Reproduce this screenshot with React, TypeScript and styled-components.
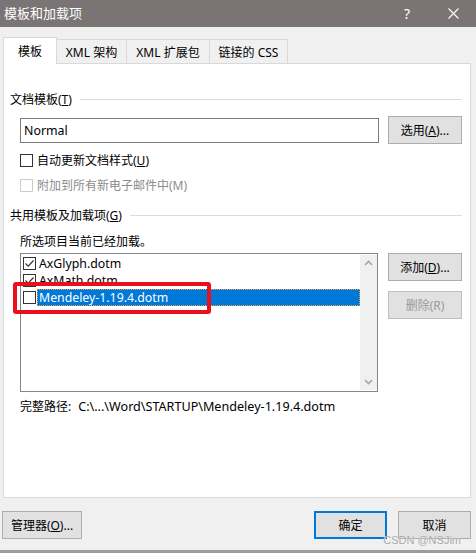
import React from "react";
import styled, { createGlobalStyle } from "styled-components";

const GlobalStyle = createGlobalStyle`
  body {
    margin: 0;
    font-family: "Noto Sans", "Noto Sans CJK SC", sans-serif;
  }
  * {
    box-sizing: border-box;
  }
`;

const FONT = `"Noto Sans", "Noto Sans CJK SC", sans-serif`;

const Window = styled.div`
  position: relative;
  width: 476px;
  height: 553px;
  background: #f0f0f0;
  border-bottom: 3px solid #9d9d9d;
  display: flex;
  flex-direction: column;
  font-family: ${FONT};
  font-size: 12px;
  color: #000;
`;

const TitleBar = styled.div`
  height: 27px;
  flex: none;
  background: #7a7474;
  display: flex;
  align-items: center;
  padding-left: 4px;
  color: #fff;
`;

const TitleText = styled.span`
  flex: 1;
  font-size: 13px;
  line-height: 27px;
`;

const TitleButton = styled.span`
  width: 46px;
  height: 27px;
  display: flex;
  align-items: center;
  justify-content: center;
  font-size: 14px;
  color: #fff;
`;

const TabRow = styled.div`
  flex: none;
  height: 27px;
  margin-top: 10px;
  padding-left: 3px;
  display: flex;
  align-items: flex-end;
`;

const Tab = styled.div<{ $active?: boolean; $w: number }>`
  width: ${(p) => p.$w}px;
  height: ${(p) => (p.$active ? 27 : 25)}px;
  display: flex;
  align-items: center;
  justify-content: center;
  padding-bottom: ${(p) => (p.$active ? 1 : 0)}px;
  background: ${(p) => (p.$active ? "#fff" : "#f0f0f0")};
  border: 1px solid #d9d9d9;
  border-bottom: none;
  border-left: ${(p) => (p.$active ? "1px solid #d9d9d9" : "none")};
  position: ${(p) => (p.$active ? "relative" : "static")};
  z-index: ${(p) => (p.$active ? 1 : "auto")};
  margin-top: ${(p) => (p.$active ? 0 : 2)}px;
  white-space: nowrap;
`;

const Panel = styled.div`
  flex: none;
  height: 435px;
  margin: -1px 5px 0 3px;
  background: #fff;
  border: 1px solid #d9d9d9;
  padding: 27px 8px 0 6px;
  display: flex;
  flex-direction: column;
`;

const GroupHeader = styled.div<{ $top: number }>`
  height: 16px;
  margin-top: ${(p) => p.$top}px;
  display: flex;
  align-items: center;
  gap: 8px;
  white-space: nowrap;
`;

const Rule = styled.div`
  flex: 1;
  height: 1px;
  background: #dcdcdc;
`;

const Indent = styled.div<{ $top: number }>`
  margin-left: 10px;
  margin-top: ${(p) => p.$top}px;
`;

const InputRow = styled(Indent)`
  display: flex;
  align-items: center;
  gap: 9px;
  height: 28px;
`;

const TextBox = styled.div`
  width: 360px;
  height: 25px;
  border: 1px solid #7a7a7a;
  background: #fff;
  padding-left: 3px;
  display: flex;
  align-items: center;
  font-size: 12.4px;
`;

const Button = styled.div<{ $w: number; $disabled?: boolean; $default?: boolean }>`
  width: ${(p) => p.$w}px;
  height: 28px;
  flex: none;
  display: flex;
  align-items: center;
  justify-content: center;
  background: #e1e1e1;
  border: ${(p) =>
    p.$default ? "2px solid #0078d7" : p.$disabled ? "1px solid #bfbfbf" : "1px solid #adadad"};
  color: ${(p) => (p.$disabled ? "#9a9a9a" : "#000")};
  white-space: nowrap;
`;

const CheckRow = styled(Indent)<{ $disabled?: boolean }>`
  height: 16px;
  display: flex;
  align-items: center;
  gap: 4px;
  color: ${(p) => (p.$disabled ? "#8c8c8c" : "#000")};
`;

const Box = styled.span<{ $disabled?: boolean }>`
  width: 13px;
  height: 13px;
  flex: none;
  border: 1px solid ${(p) => (p.$disabled ? "#cccccc" : "#333333")};
  background: #fff;
  display: flex;
  align-items: center;
  justify-content: center;
`;

const Note = styled(Indent)`
  height: 16px;
  line-height: 16px;
`;

const ListArea = styled(Indent)`
  display: flex;
  align-items: flex-start;
`;

const ListBox = styled.div`
  position: relative;
  width: 359px;
  height: 139px;
  border: 1px solid #828790;
  background: #fff;
  display: flex;
`;

const Rows = styled.div`
  flex: 1;
  padding-top: 1px;
  display: flex;
  flex-direction: column;
`;

const Row = styled.div`
  height: 17px;
  display: flex;
  align-items: center;
  padding-left: 2px;
`;

const ItemLabel = styled.span<{ $selected?: boolean }>`
  flex: 1;
  height: 17px;
  margin-left: 1px;
  padding-left: 2px;
  display: flex;
  align-items: center;
  font-size: 12.3px;
  color: ${(p) => (p.$selected ? "#fff" : "#000")};
  background: ${(p) => (p.$selected ? "#0078d7" : "transparent")};
  outline: ${(p) => (p.$selected ? "1px dotted #f0a040" : "none")};
  outline-offset: -1px;
`;

const ScrollBar = styled.div`
  width: 17px;
  height: 135px;
  margin: 1px 0 1px 0;
  background: #f0f0f0;
  display: flex;
  flex-direction: column;
  justify-content: space-between;
  align-items: center;
  padding: 5px 0;
`;

const Highlight = styled.div`
  position: absolute;
  left: -8px;
  top: 28px;
  width: 198px;
  height: 32px;
  border: 4px solid #ea0f1c;
  border-radius: 3px;
`;

const SideButtons = styled.div`
  margin-left: 10px;
  display: flex;
  flex-direction: column;
  gap: 10px;
`;

const PathLine = styled(Indent)`
  height: 16px;
  display: flex;
  align-items: center;
  gap: 7px;
  white-space: nowrap;
`;

const PathText = styled.span`
  font-size: 12.6px;
`;

const BottomBar = styled.div`
  flex: none;
  height: 28px;
  margin-top: 13px;
  padding: 0 5px 0 2px;
  display: flex;
  gap: 11px;
`;

const Spacer = styled.div`
  flex: 1;
`;

const Watermark = styled.span`
  position: absolute;
  right: 15px;
  bottom: 4px;
  font-family: "Liberation Sans", sans-serif;
  font-size: 11px;
  color: #a6a6a6;
  text-shadow: 0 0 1px #fff;
`;

const Check = ({ checked, disabled }: { checked?: boolean; disabled?: boolean }) => (
  <Box $disabled={disabled}>
    {checked && (
      <svg width="11" height="11" viewBox="0 0 11 11">
        <path d="M1.5 5.5 L4.2 8.2 L9.5 2.5" fill="none" stroke="#333" strokeWidth="1.2" />
      </svg>
    )}
  </Box>
);

const Chevron = ({ up }: { up?: boolean }) => (
  <svg width="9" height="6" viewBox="0 0 9 6">
    <path
      d={up ? "M1 5 L4.5 1.5 L8 5" : "M1 1 L4.5 4.5 L8 1"}
      fill="none"
      stroke="#a6a6a6"
      strokeWidth="1.6"
    />
  </svg>
);

const items = [
  { name: "AxGlyph.dotm", checked: true },
  { name: "AxMath.dotm", checked: true },
  { name: "Mendeley-1.19.4.dotm", checked: false, selected: true },
];

const App = () => (
  <>
    <GlobalStyle />
    <Window>
      <TitleBar>
        <TitleText>模板和加载项</TitleText>
        <TitleButton>?</TitleButton>
        <TitleButton>
          <svg width="11" height="11" viewBox="0 0 11 11">
            <path d="M0.5 0.5 L10.5 10.5 M10.5 0.5 L0.5 10.5" stroke="#fff" strokeWidth="1.1" />
          </svg>
        </TitleButton>
      </TitleBar>

      <TabRow>
        <Tab $active $w={54}>模板</Tab>
        <Tab $w={70}>XML 架构</Tab>
        <Tab $w={83}>XML 扩展包</Tab>
        <Tab $w={78}>链接的 CSS</Tab>
      </TabRow>

      <Panel>
        <GroupHeader $top={0}>
          <span>
            文档模板(<u>T</u>)
          </span>
          <Rule />
        </GroupHeader>

        <InputRow $top={9}>
          <TextBox>Normal</TextBox>
          <Button $w={74}>
            选用(<u>A</u>)...
          </Button>
        </InputRow>

        <CheckRow $top={8}>
          <Check />
          <span>
            自动更新文档样式(<u>U</u>)
          </span>
        </CheckRow>
        <CheckRow $top={9} $disabled>
          <Check disabled />
          <span>附加到所有新电子邮件中(M)</span>
        </CheckRow>

        <GroupHeader $top={14}>
          <span>
            共用模板及加载项(<u>G</u>)
          </span>
          <Rule />
        </GroupHeader>

        <Note $top={11}>所选项目当前已经加载。</Note>

        <ListArea $top={3}>
          <ListBox>
            <Rows>
              {items.map((it) => (
                <Row key={it.name}>
                  <Check checked={it.checked} />
                  <ItemLabel $selected={it.selected}>{it.name}</ItemLabel>
                </Row>
              ))}
            </Rows>
            <ScrollBar>
              <Chevron up />
              <Chevron />
            </ScrollBar>
            <Highlight />
          </ListBox>
          <SideButtons>
            <Button $w={74}>
              添加(<u>D</u>)...
            </Button>
            <Button $w={74} $disabled>
              删除(R)
            </Button>
          </SideButtons>
        </ListArea>

        <PathLine $top={6}>
          <span>完整路径:</span>
          <PathText>C:\...\Word\STARTUP\Mendeley-1.19.4.dotm</PathText>
        </PathLine>
      </Panel>

      <BottomBar>
        <Button $w={80}>
          管理器(<u>O</u>)...
        </Button>
        <Spacer />
        <Button $w={73} $default>
          确定
        </Button>
        <Button $w={73}>取消</Button>
      </BottomBar>

      <Watermark>CSDN @NSJim</Watermark>
    </Window>
  </>
);

export default App;
